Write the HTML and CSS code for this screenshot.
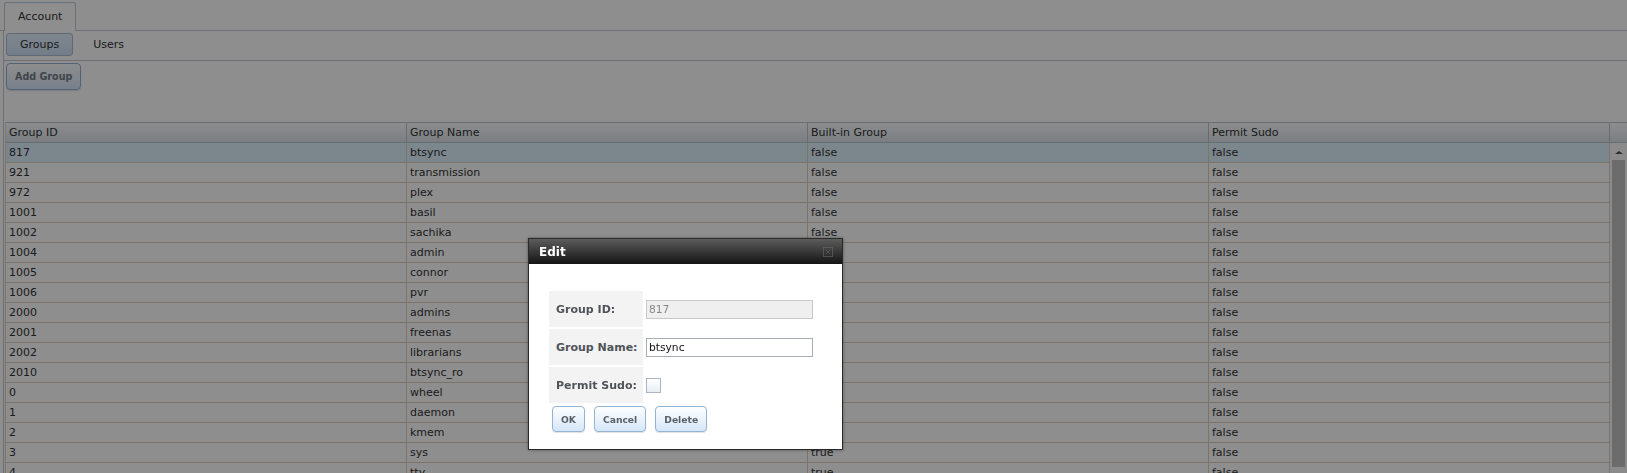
FILE: index.html
```html
<!DOCTYPE html>
<html lang="en">
<head>
  <meta charset="UTF-8" />
  <title>Account - Groups</title>
  <link rel="stylesheet" href="styles.css">
</head>
<body>
  <div class="tabbar">
    <div class="tab">Account</div>
  </div>

  <div class="pane">
    <div class="subtabs">
      <button class="subtab active">Groups</button>
      <button class="subtab">Users</button>
    </div>
    <div class="toolbar">
      <button class="btn">Add Group</button>
    </div>

    <div class="grid">
      <div class="grid-head">
        <div class="cell">Group ID</div>
        <div class="cell">Group Name</div>
        <div class="cell">Built-in Group</div>
        <div class="cell">Permit Sudo</div>
        <div class="sb-head"></div>
      </div>
      <div class="grid-body">
        <div class="rows" id="rows"></div>
        <div class="scrollbar">
          <span class="arrow"></span>
          <div class="thumb"></div>
        </div>
      </div>
    </div>
  </div>

  <div class="overlay"></div>

  <div class="dialog">
    <div class="dialog-title">
      <span>Edit</span>
      <svg class="close" width="10" height="10" viewBox="0 0 10 10">
        <rect x="0.5" y="0.5" width="9" height="9" fill="none" stroke="#6a6a6a" />
        <path d="M2.5 2.5 L7.5 7.5 M7.5 2.5 L2.5 7.5" stroke="#6a6a6a" stroke-width="1" />
      </svg>
    </div>
    <div class="dialog-body">
      <div class="form-row">
        <div class="form-label">Group ID:</div>
        <div class="form-field"><input class="text" type="text" value="817" disabled></div>
      </div>
      <div class="form-row">
        <div class="form-label">Group Name:</div>
        <div class="form-field"><input class="text" type="text" value="btsync"></div>
      </div>
      <div class="form-row">
        <div class="form-label">Permit Sudo:</div>
        <div class="form-field"><span class="check"></span></div>
      </div>
      <div class="actions">
        <button class="btn">OK</button>
        <button class="btn">Cancel</button>
        <button class="btn">Delete</button>
      </div>
    </div>
  </div>

  <script>
    const groups = [
      [817, "btsync", "false", "false"],
      [921, "transmission", "false", "false"],
      [972, "plex", "false", "false"],
      [1001, "basil", "false", "false"],
      [1002, "sachika", "false", "false"],
      [1004, "admin", "false", "false"],
      [1005, "connor", "false", "false"],
      [1006, "pvr", "false", "false"],
      [2000, "admins", "false", "false"],
      [2001, "freenas", "false", "false"],
      [2002, "librarians", "false", "false"],
      [2010, "btsync_ro", "false", "false"],
      [0, "wheel", "true", "false"],
      [1, "daemon", "true", "false"],
      [2, "kmem", "true", "false"],
      [3, "sys", "true", "false"],
      [4, "tty", "true", "false"]
    ];

    const rows = document.getElementById("rows");
    groups.forEach((g, i) => {
      const row = `
        <div class="row${i === 0 ? " selected" : ""}">
          <div class="cell">${g[0]}</div><div class="cell">${g[1]}</div>
          <div class="cell">${g[2]}</div><div class="cell">${g[3]}</div>
        </div>`;
      rows.insertAdjacentHTML("beforeend", row);
    });
  </script>
</body>
</html>
```

FILE: styles.css
```css
html, body {
  margin: 0;
  height: 473px;
  overflow: hidden;
}
body {
  font-family: 'DejaVu Sans', Verdana, sans-serif;
  font-size: 11px;
  color: #333;
  background: #fff;
}
button {
  font-family: inherit;
  cursor: pointer;
}

/* top tabs */
.tabbar {
  display: flex;
  align-items: flex-end;
  height: 31px;
  box-sizing: border-box;
  padding-left: 4px;
  border-bottom: 1px solid #c7c7d4;
}
.tab {
  height: 29px;
  box-sizing: border-box;
  margin-bottom: -1px;
  padding: 0 13px;
  line-height: 28px;
  background: #fff;
  border: 1px solid #c7c7d4;
  border-bottom: none;
  border-top-color: #b9cde4;
  border-radius: 3px 3px 0 0;
}

.pane {
  margin-left: 3px;
  border-left: 1px solid #c7c7d4;
}
.subtabs {
  display: flex;
  align-items: flex-start;
  height: 30px;
  box-sizing: border-box;
  padding: 2px 0 0 2px;
  border-bottom: 1px solid #c7c7d4;
}
.subtab {
  height: 23px;
  padding: 0 13px;
  margin-right: 6px;
  font-size: 11px;
  color: #333;
  background: none;
  border: 1px solid transparent;
  border-radius: 3px;
}
.subtab.active {
  background: linear-gradient(#e4f1ff, #cfe2f6);
  border-color: #a9bfd8;
}
.toolbar {
  height: 60.5px;
  box-sizing: border-box;
  padding: 2px 0 0 2px;
}
.btn {
  height: 27px;
  padding: 0 8px;
  font-size: 9.6px;
  font-weight: bold;
  color: #767c83;
  background: linear-gradient(#fdfeff, #d6e7f9);
  border: 1px solid #95b3d2;
  border-radius: 4px;
  box-shadow: 0 1px 1px rgba(0,0,0,0.12);
}

/* grid */
.grid {
  margin-left: 1px;
}
.grid-head {
  display: flex;
  height: 21px;
  box-sizing: border-box;
  background: linear-gradient(#fbfdff, #dce2e9);
  border-top: 1px solid #bec4ca;
  border-bottom: 1px solid #bec4ca;
  border-left: 1px solid #d6d9dd;
}
.grid-head .cell {
  border-right-color: #bec4ca;
  line-height: 19px;
}
.sb-head {
  flex: 1;
}
.cell {
  flex: 0 0 401px;
  box-sizing: border-box;
  padding: 0 3px;
  border-right: 1px solid #dcd0c4;
  white-space: nowrap;
  overflow: hidden;
}
.grid-body {
  display: flex;
}
.rows {
  border-left: 1px solid #dcd0c4;
}
.row {
  display: flex;
  height: 20px;
  box-sizing: border-box;
  border-bottom: 1px solid #dcd0c4;
  line-height: 19px;
}
.row.selected {
  background: #dff0fe;
}
.scrollbar {
  flex: 1;
  display: flex;
  flex-direction: column;
  align-items: center;
  background: #fafafa;
  padding-top: 8px;
}
.arrow {
  width: 0;
  height: 0;
  border-left: 4px solid transparent;
  border-right: 4px solid transparent;
  border-bottom: 3px solid #555;
}
.thumb {
  width: 13px;
  height: 307px;
  margin-top: 6px;
  background: #c3c3c3;
}

/* modal */
.overlay {
  position: fixed;
  inset: 0;
  background: rgba(0, 0, 0, 0.443);
}
.dialog {
  position: absolute;
  left: 528px;
  top: 238px;
  width: 315px;
  height: 212px;
  box-sizing: border-box;
  background: #fff;
  border: 1px solid #2a2a2a;
  box-shadow: 0 0 3px rgba(0,0,0,0.4);
}
.dialog-title {
  display: flex;
  align-items: center;
  justify-content: space-between;
  height: 25px;
  padding: 0 9px 0 10px;
  background: linear-gradient(#5c5c5c, #141414);
  color: #fff;
  font-size: 12px;
  font-weight: bold;
}
.close {
  opacity: 0.6;
}
.dialog-body {
  padding: 27px 0 0 20px;
}
.form-row {
  display: flex;
  margin-bottom: 2px;
}
.form-label {
  width: 94px;
  height: 36px;
  box-sizing: border-box;
  padding-left: 7px;
  display: flex;
  align-items: center;
  background: #f3f3f3;
  font-size: 11px;
  font-weight: bold;
  color: #4f5359;
}
.form-field {
  display: flex;
  align-items: center;
  padding-left: 3px;
}
.text {
  width: 167px;
  height: 19px;
  box-sizing: border-box;
  margin: 0;
  padding: 0 2px;
  font-family: inherit;
  font-size: 10.7px;
  color: #111;
  border: 1px solid #a8acba;
  background: #fff;
}
.text:disabled {
  background: #efefef;
  color: #888;
  border-color: #c8c8c8;
}
.check {
  width: 15px;
  height: 15px;
  box-sizing: border-box;
  border: 1px solid #a9b4c4;
  background: linear-gradient(#fff, #e9eef4);
}
.actions {
  display: flex;
  gap: 9px;
  margin-top: 3px;
  padding-left: 3px;
}
.actions .btn {
  height: 26px;
  padding: 0 8px;
  font-size: 9.2px;
  color: #5a6068;
}
```
